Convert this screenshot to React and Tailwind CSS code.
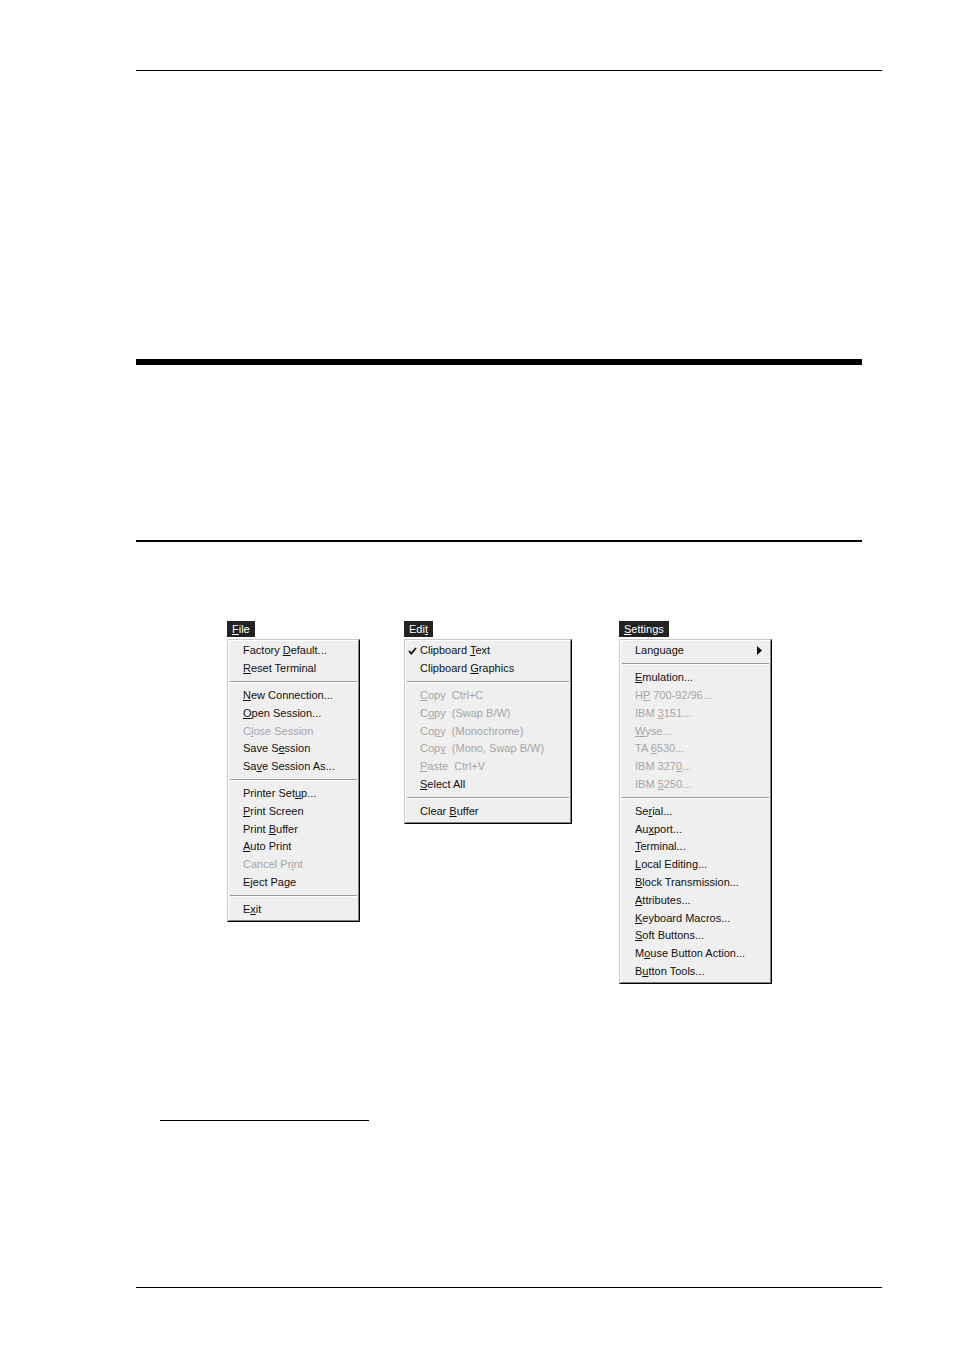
import React from "react";

const SEP = "sep";

// each item: [text, underlineIndex, disabled, extra]
const fileItems = [
  ["Factory Default...", 8],
  ["Reset Terminal", 0],
  SEP,
  ["New Connection...", 0],
  ["Open Session...", 0],
  ["Close Session", 1, true],
  ["Save Session", 6],
  ["Save Session As...", 2],
  SEP,
  ["Printer Setup...", 11],
  ["Print Screen", 0],
  ["Print Buffer", 6],
  ["Auto Print", 0],
  ["Cancel Print", 9, true],
  ["Eject Page", -1],
  SEP,
  ["Exit", 1],
];

const editItems = [
  ["Clipboard Text", 10, false, "check"],
  ["Clipboard Graphics", 10],
  SEP,
  ["Copy\u00a0\u00a0Ctrl+C", 0, true],
  ["Copy\u00a0\u00a0(Swap B/W)", 1, true],
  ["Copy\u00a0\u00a0(Monochrome)", 2, true],
  ["Copy\u00a0\u00a0(Mono, Swap B/W)", 3, true],
  ["Paste\u00a0\u00a0Ctrl+V", 0, true],
  ["Select All", 0],
  SEP,
  ["Clear Buffer", 6],
];

const settingsItems = [
  ["Language", -1, false, "arrow"],
  SEP,
  ["Emulation...", 0],
  ["HP 700-92/96...", 1, true],
  ["IBM 3151...", 4, true],
  ["Wyse...", 0, true],
  ["TA 6530...", 3, true],
  ["IBM 3270...", 7, true],
  ["IBM 5250...", 4, true],
  SEP,
  ["Serial...", 2],
  ["Auxport...", 2],
  ["Terminal...", 0],
  ["Local Editing...", 0],
  ["Block Transmission...", 0],
  ["Attributes...", 0],
  ["Keyboard Macros...", 0],
  ["Soft Buttons...", 0],
  ["Mouse Button Action...", 1],
  ["Button Tools...", 1],
];

function Label({ text, u }) {
  if (u < 0) return <span>{text}</span>;
  return (
    <span>
      {text.slice(0, u)}
      <u className="underline-offset-1">{text[u]}</u>
      {text.slice(u + 1)}
    </span>
  );
}

function MenuItem({ item }) {
  if (item === SEP) {
    return (
      <div className="h-[9px] flex flex-col justify-center px-[1px]">
        <div className="h-px bg-[#9a9a9a]" />
        <div className="h-px bg-white" />
      </div>
    );
  }
  const [text, u, disabled, extra] = item;
  return (
    <div
      className={
        "relative h-[17.8px] flex items-center pl-[14px] pr-3 whitespace-nowrap " +
        (disabled ? "text-[#a6a6a6]" : "text-[#111]")
      }
    >
      {extra === "check" && (
        <svg
          className="absolute left-[2px] top-[5px]"
          width="9"
          height="8"
          viewBox="0 0 9 8"
        >
          <path d="M1 4 L3.3 6.6 L8 1" stroke="#111" strokeWidth="1.8" fill="none" />
        </svg>
      )}
      <Label text={text} u={u} />
      {extra === "arrow" && (
        <svg
          className="absolute right-[8px] top-[4px]"
          width="5"
          height="9"
          viewBox="0 0 5 9"
        >
          <path d="M0 0 L5 4.5 L0 9 Z" fill="#111" />
        </svg>
      )}
    </div>
  );
}

function Menu({ title, u, items, width }) {
  return (
    <div className="flex flex-col items-start">
      <div className="h-4 bg-[#222] text-white px-[5px] flex items-center mb-[2px]">
        <Label text={title} u={u} />
      </div>
      <div
        className="border-t border-l border-r border-b border-t-[#c8c8c8] border-l-[#c8c8c8] border-r-black border-b-black"
        style={{ width }}
      >
        <div className="border-t border-l border-r border-b border-t-white border-l-white border-r-[#808080] border-b-[#808080] bg-[#efefef] pt-px pb-[2px]">
          {items.map((it, i) => (
            <MenuItem key={i} item={it} />
          ))}
        </div>
      </div>
    </div>
  );
}

export default function App() {
  return (
    <div
      className="w-[954px] min-h-[1352px] bg-white flex flex-col text-[11px] leading-none"
      style={{ fontFamily: '"Liberation Sans", Arial, sans-serif' }}
    >
      <div className="mt-[70px] ml-[136px] w-[746px] h-px bg-black" />
      <div className="mt-[288px] ml-[136px] w-[726px] h-[6px] bg-black" />
      <div className="mt-[175px] ml-[136px] w-[726px] h-[2px] bg-black" />

      <div className="mt-[79px] ml-[227px] flex items-start">
        <Menu title="File" u={0} items={fileItems} width={133} />
        <div className="w-[44px]" />
        <Menu title="Edit" u={3} items={editItems} width={168} />
        <div className="w-[47px]" />
        <Menu title="Settings" u={0} items={settingsItems} width={153} />
      </div>

      <div className="mt-[136px] ml-[160px] w-[209px] h-px bg-black" />
      <div className="mt-[166px] ml-[136px] w-[746px] h-px bg-black" />
    </div>
  );
}
